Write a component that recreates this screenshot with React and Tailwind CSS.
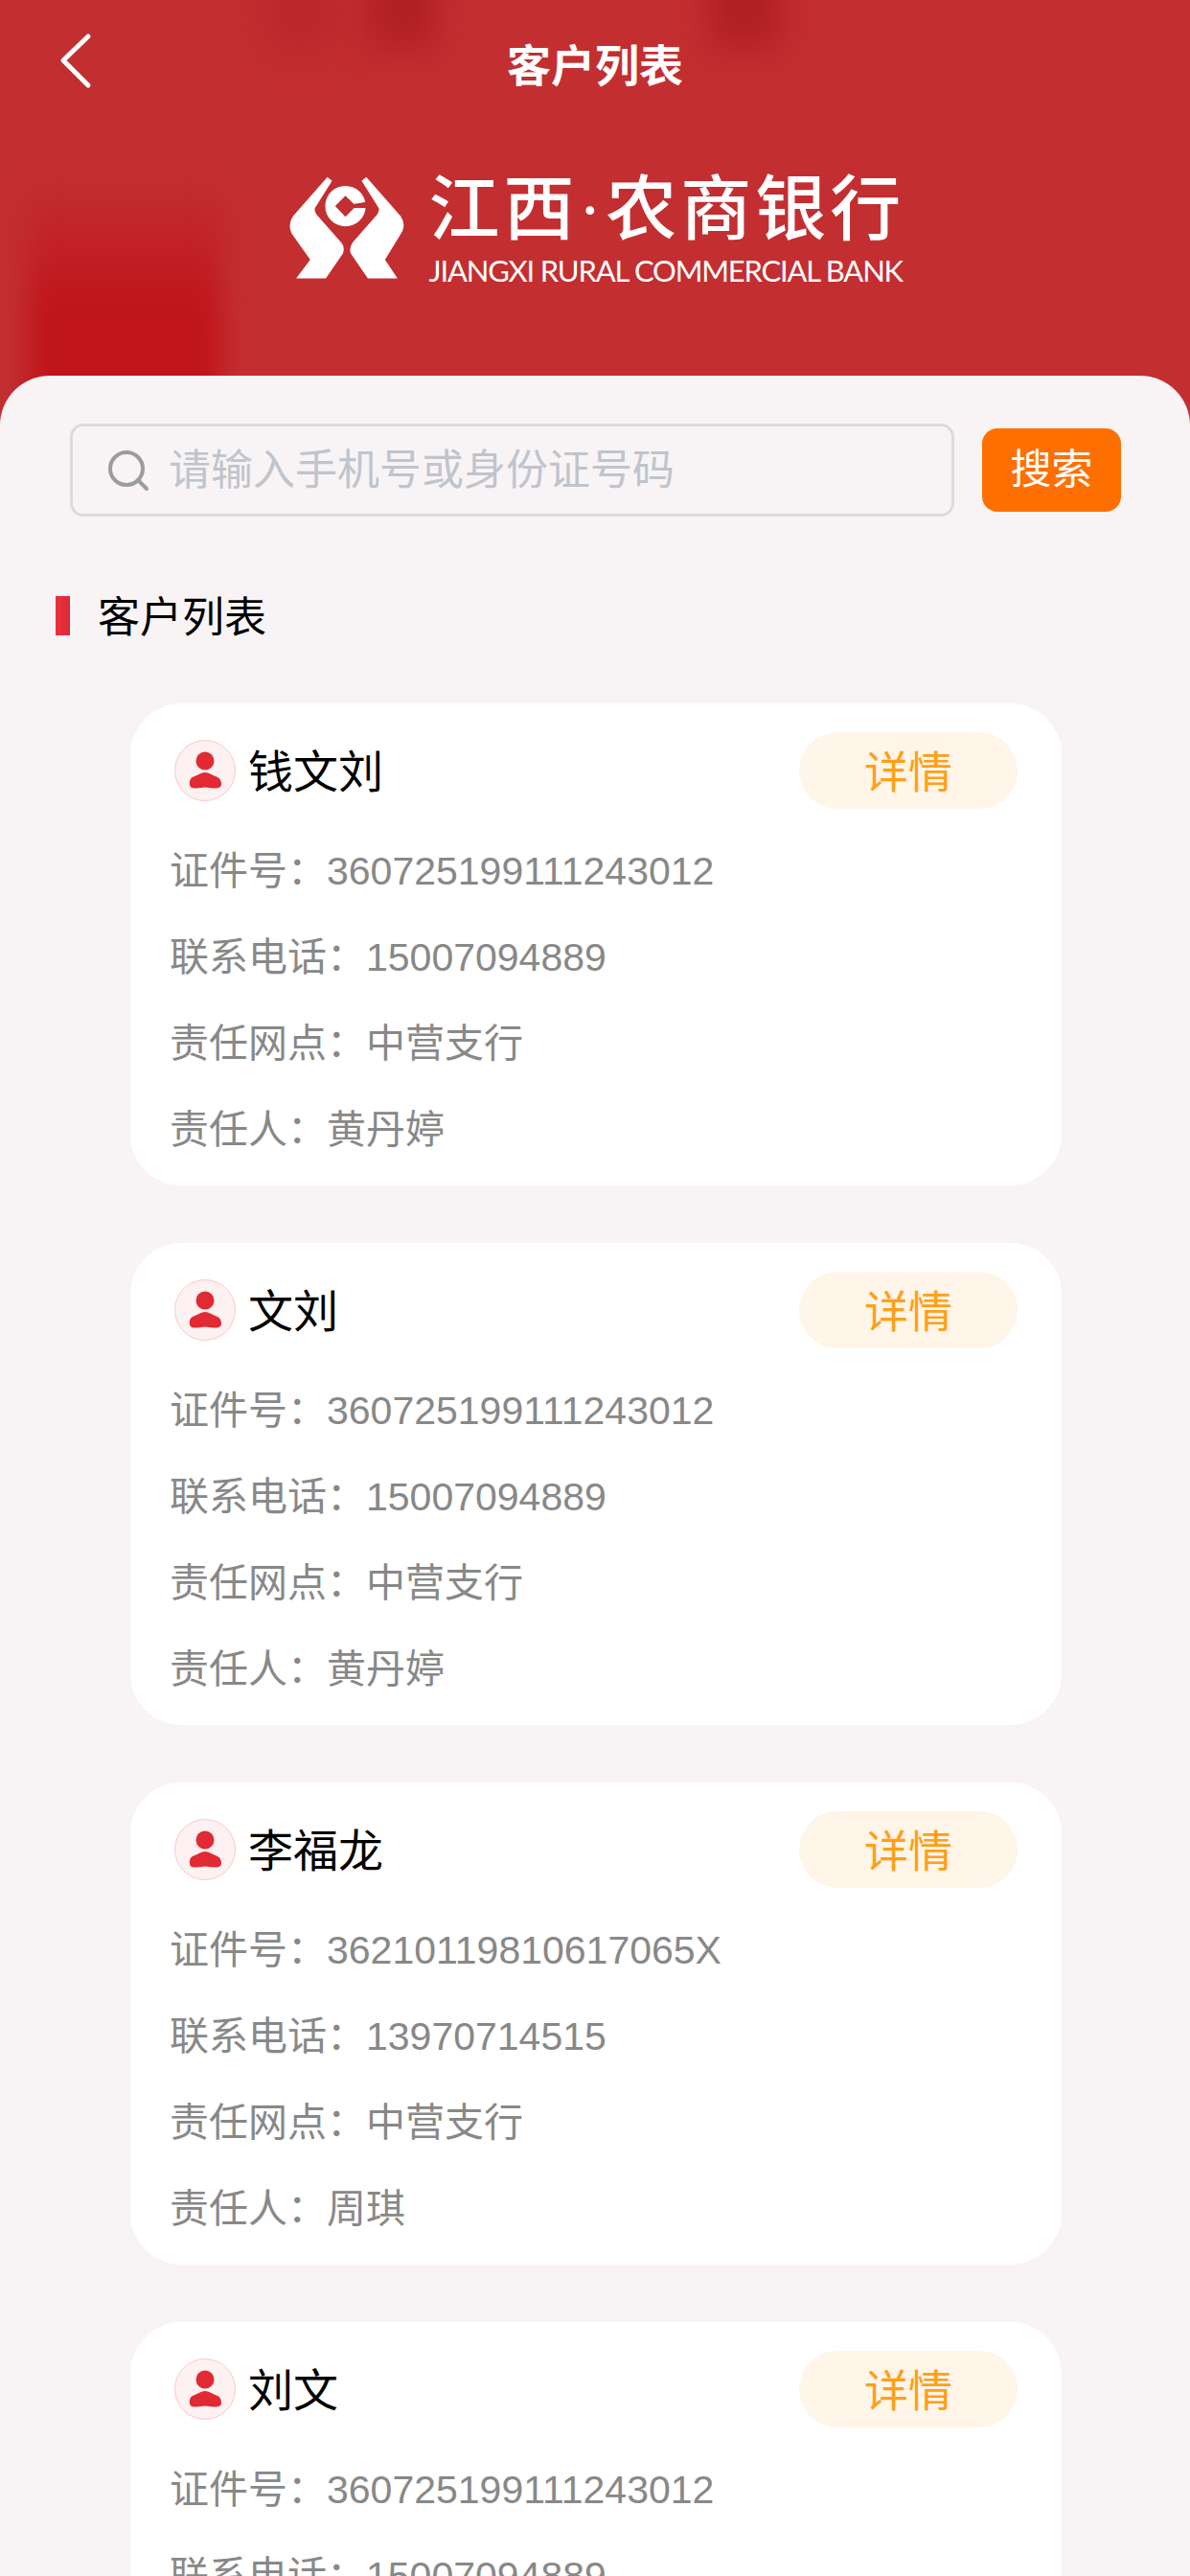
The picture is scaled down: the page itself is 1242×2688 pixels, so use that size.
import React from 'react';

const customers = [
  { name: '钱文刘', idNo: '360725199111243012', phone: '15007094889', branch: '中营支行', manager: '黄丹婷' },
  { name: '文刘', idNo: '360725199111243012', phone: '15007094889', branch: '中营支行', manager: '黄丹婷' },
  { name: '李福龙', idNo: '36210119810617065X', phone: '13970714515', branch: '中营支行', manager: '周琪' },
  { name: '刘文', idNo: '360725199111243012', phone: '15007094889', branch: '中营支行', manager: '黄丹婷' },
];

const BankEmblem = () => (
  <svg width="122" height="111" viewBox="15 20 375 340" fill="#fff" className="shrink-0">
    <path d="M140 25 L155 37 L100 125 Q98 135 105 145 L185 235 Q197 250 190 270 L135 350 L40 350 L85 290 L25 205 Q12 175 30 150 Z" />
    <path d="M265 25 L250 37 L305 125 Q307 135 300 145 L225 230 Q208 250 215 270 L270 350 L365 350 L325 290 L380 200 Q392 175 375 150 Z" />
    <circle cx="198" cy="118" r="65" />
    <path d="M198 85 L232 118 L198 152 L165 118 Z" fill="#c32e31" />
    <path d="M222 112 L270 104 L270 124 L226 124 Z" fill="#c32e31" />
  </svg>
);

const UserAvatar = () => (
  <svg width="64" height="64" viewBox="0 0 64 64" className="shrink-0">
    <circle cx="32" cy="32" r="31.5" fill="#fdf1f1" stroke="#f8c9cc" strokeWidth="1" />
    <circle cx="32" cy="22" r="9.5" fill="#e12a34" />
    <path d="M32 34 C36 34 40 37 44 38.5 C48 40 49.5 44 49 47 C48.5 50 45 50.5 41 50.5 C37 50.5 35 49.5 32 49.5 C29 49.5 27 50.5 23 50.5 C19 50.5 16.5 50 16 47 C15.5 44 16 40 20 38.5 C24 37 28 34 32 34 Z" fill="#e12a34" />
  </svg>
);

const CustomerCard = ({ customer }) => {
  const rows = [
    ['证件号：', customer.idNo],
    ['联系电话：', customer.phone],
    ['责任网点：', customer.branch],
    ['责任人：', customer.manager],
  ];
  return (
    <div className="bg-white rounded-[54px] h-[503px] shrink-0 pt-[30px] pl-[41px] pr-[46px]">
      <div className="flex items-center justify-between h-[80px]">
        <div className="flex items-center ml-[5px]">
          <UserAvatar />
          <span className="ml-[13px] pt-[3px] text-[47px] leading-[64px] text-black">{customer.name}</span>
        </div>
        <button className="w-[228px] h-[80px] pt-[5px] rounded-full bg-[#fff5e8] text-[#ff9f1a] text-[46px] leading-[75px]">详情</button>
      </div>
      <div className="mt-[20px]">
        {rows.map(([label, value]) => (
          <div key={label} className="h-[90px] leading-[90px] text-[41px] text-[#888888] whitespace-nowrap">
            {label}{value}
          </div>
        ))}
      </div>
    </div>
  );
};

export default function App() {
  return (
    <div className="w-[1242px] h-[2688px] overflow-hidden bg-[#f8f4f6] font-['Liberation_Sans','Noto_Sans_CJK_SC',sans-serif]">
      {/* header */}
      <div className="relative h-[442px] bg-[#c32e31] overflow-hidden">
        <div className="absolute left-[30px] top-[190px] w-[200px] h-[270px] bg-gradient-to-b from-transparent via-[#bf151a] to-[#bf151a] blur-[14px]" />
        <div className="absolute left-[280px] -top-[40px] w-[70px] h-[90px] bg-[#b01f22] blur-[22px] opacity-50" />
        <div className="absolute left-[385px] -top-[40px] w-[70px] h-[90px] bg-[#a81a1d] blur-[18px] opacity-70" />
        <div className="absolute left-[740px] -top-[40px] w-[75px] h-[90px] bg-[#a81a1d] blur-[18px] opacity-70" />
        <div className="relative flex items-center justify-center h-[136px]">
          <svg width="40" height="62" viewBox="0 0 40 62" className="absolute left-[60px] top-[33px]" fill="none" stroke="#fff" strokeWidth="5" strokeLinecap="round" strokeLinejoin="round">
            <path d="M32 5 L6 30 L32 56" />
          </svg>
          <span className="pt-[2px] text-white font-bold text-[46px] leading-[60px]">客户列表</span>
        </div>
        <div className="relative flex justify-center items-start mt-[47px]">
          <BankEmblem />
          <div className="ml-[25px] w-[494px] text-white">
            <div className="text-[74px] leading-[72px] tracking-[4px] font-medium whitespace-nowrap font-['Liberation_Serif','Noto_Sans_CJK_SC',serif]">江西·农商银行</div>
            <div className="mt-[9px] text-[31px] leading-[36px] tracking-[-1.2px] whitespace-nowrap font-['Lato',sans-serif]">JIANGXI RURAL COMMERCIAL BANK</div>
          </div>
        </div>
      </div>

      {/* panel */}
      <div className="relative -mt-[50px] rounded-t-[52px] bg-[#f8f4f6] pt-[50px]">
        <div className="flex items-center pl-[73px]">
          <div className="flex items-center w-[923px] h-[97px] border-[3px] border-[#d9dbe0] rounded-[14px] pl-[37px]">
            <svg width="42" height="42" viewBox="0 0 42 42" fill="none" stroke="#9a9c9f" strokeWidth="4" strokeLinecap="round" className="shrink-0">
              <circle cx="19" cy="19" r="17" />
              <path d="M31 31 L40 40" />
            </svg>
            <input
              readOnly
              placeholder="请输入手机号或身份证号码"
              className="ml-[21px] flex-1 min-w-0 bg-transparent outline-none text-[44px] placeholder:text-[#c0c4cc]"
            />
          </div>
          <button className="ml-[29px] w-[145px] h-[87px] rounded-[16px] bg-[#ff6f00] text-white text-[43px]">搜索</button>
        </div>

        <div className="flex items-center mt-[74px] ml-[58px] h-[58px]">
          <div className="w-[15px] h-[41px] bg-gradient-to-r from-[#f0303f] to-[#d92b35]" />
          <span className="ml-[29px] pt-[5px] text-[44px] text-black leading-[53px]">客户列表</span>
        </div>

        <div className="flex flex-col gap-[60px] mt-[63px] ml-[136px] w-[972px]">
          {customers.map((c, i) => (
            <CustomerCard key={i} customer={c} />
          ))}
        </div>
      </div>
    </div>
  );
}
